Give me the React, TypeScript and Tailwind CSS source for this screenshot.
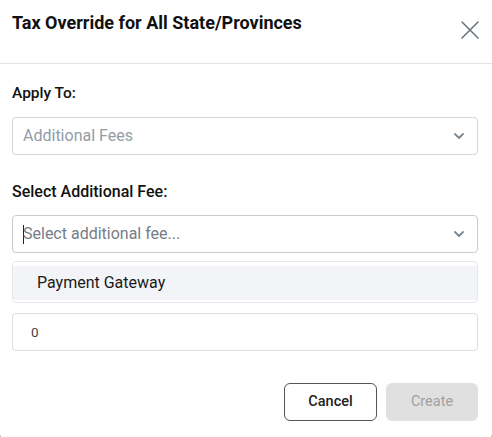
import React from "react";

export default function App() {
  return (
    <div className="w-[492px] h-[437px] bg-[#3a3f47] overflow-hidden" style={{ fontFamily: "Roboto, 'Liberation Sans', sans-serif" }}>
      <div className="w-[492px] h-[442px] bg-white rounded-b-[8px] flex flex-col">
        <div className="h-[64px] flex items-start justify-between pl-3 pr-[13px] pt-[12px] border-b border-[#e2e4e8]">
          <h1 className="text-[18px] leading-[22px] font-bold text-[#111]">Tax Override for All State/Provinces</h1>
          <button className="mt-[9px] text-[#6b7682]">
            <svg width="18" height="18" viewBox="0 0 18 18" fill="none" stroke="currentColor" strokeWidth="1.6" strokeLinecap="round">
              <path d="M1 1L17 17M17 1L1 17" />
            </svg>
          </button>
        </div>
        <div className="pl-3 pr-[14px] flex flex-col">
          <label className="mt-[19px] text-[15.5px] leading-[20px] font-medium text-[#111]">Apply To:</label>
          <div className="mt-[14px] h-[38px] border border-[#d3d6da] rounded-[4px] flex items-center justify-between pl-[10px] pr-[12px]">
            <span className="text-[16px] text-[#939ca6]">Additional Fees</span>
            <Chevron />
          </div>
          <label className="mt-[27px] text-[16px] leading-[20px] font-medium text-[#111]">Select Additional Fee:</label>
          <div className="mt-[13px] h-[38px] border border-[#c9ccd1] rounded-[4px] flex items-center justify-between pl-[10px] pr-[12px]">
            <span className="text-[16px] text-[#767d86] flex items-center">
              <span className="inline-block w-px h-[19px] bg-[#222] mr-[-1px]" />
              Select additional fee...
            </span>
            <Chevron />
          </div>
          <div className="mt-[8px] h-[42px] border border-[#e6e8ec] rounded-[4px] bg-white pt-[4px]">
            <div className="h-[34px] bg-[#f3f4f8] flex items-center pl-[24px] text-[16px] text-[#1a1a1a]">Payment Gateway</div>
          </div>
          <div className="mt-[10px] h-[38px] border border-[#dcdee3] rounded-[4px] flex items-center pl-[18px] text-[13.5px] text-[#444]">0</div>
          <div className="mt-[32px] flex justify-end gap-[9px]">
            <button className="w-[93px] h-[38px] border border-[#555] rounded-[6px] text-[14.5px] font-medium text-[#222]">Cancel</button>
            <button className="w-[92px] h-[38px] rounded-[6px] bg-[#e0e0e0] text-[14.5px] text-[#a0a0a0]">Create</button>
          </div>
        </div>
      </div>
    </div>
  );
}

function Chevron() {
  return (
    <svg width="12" height="8" viewBox="0 0 12 8" fill="none" stroke="#7d8793" strokeWidth="1.8" strokeLinecap="round" strokeLinejoin="round">
      <path d="M2 2l4 4 4-4" />
    </svg>
  );
}
